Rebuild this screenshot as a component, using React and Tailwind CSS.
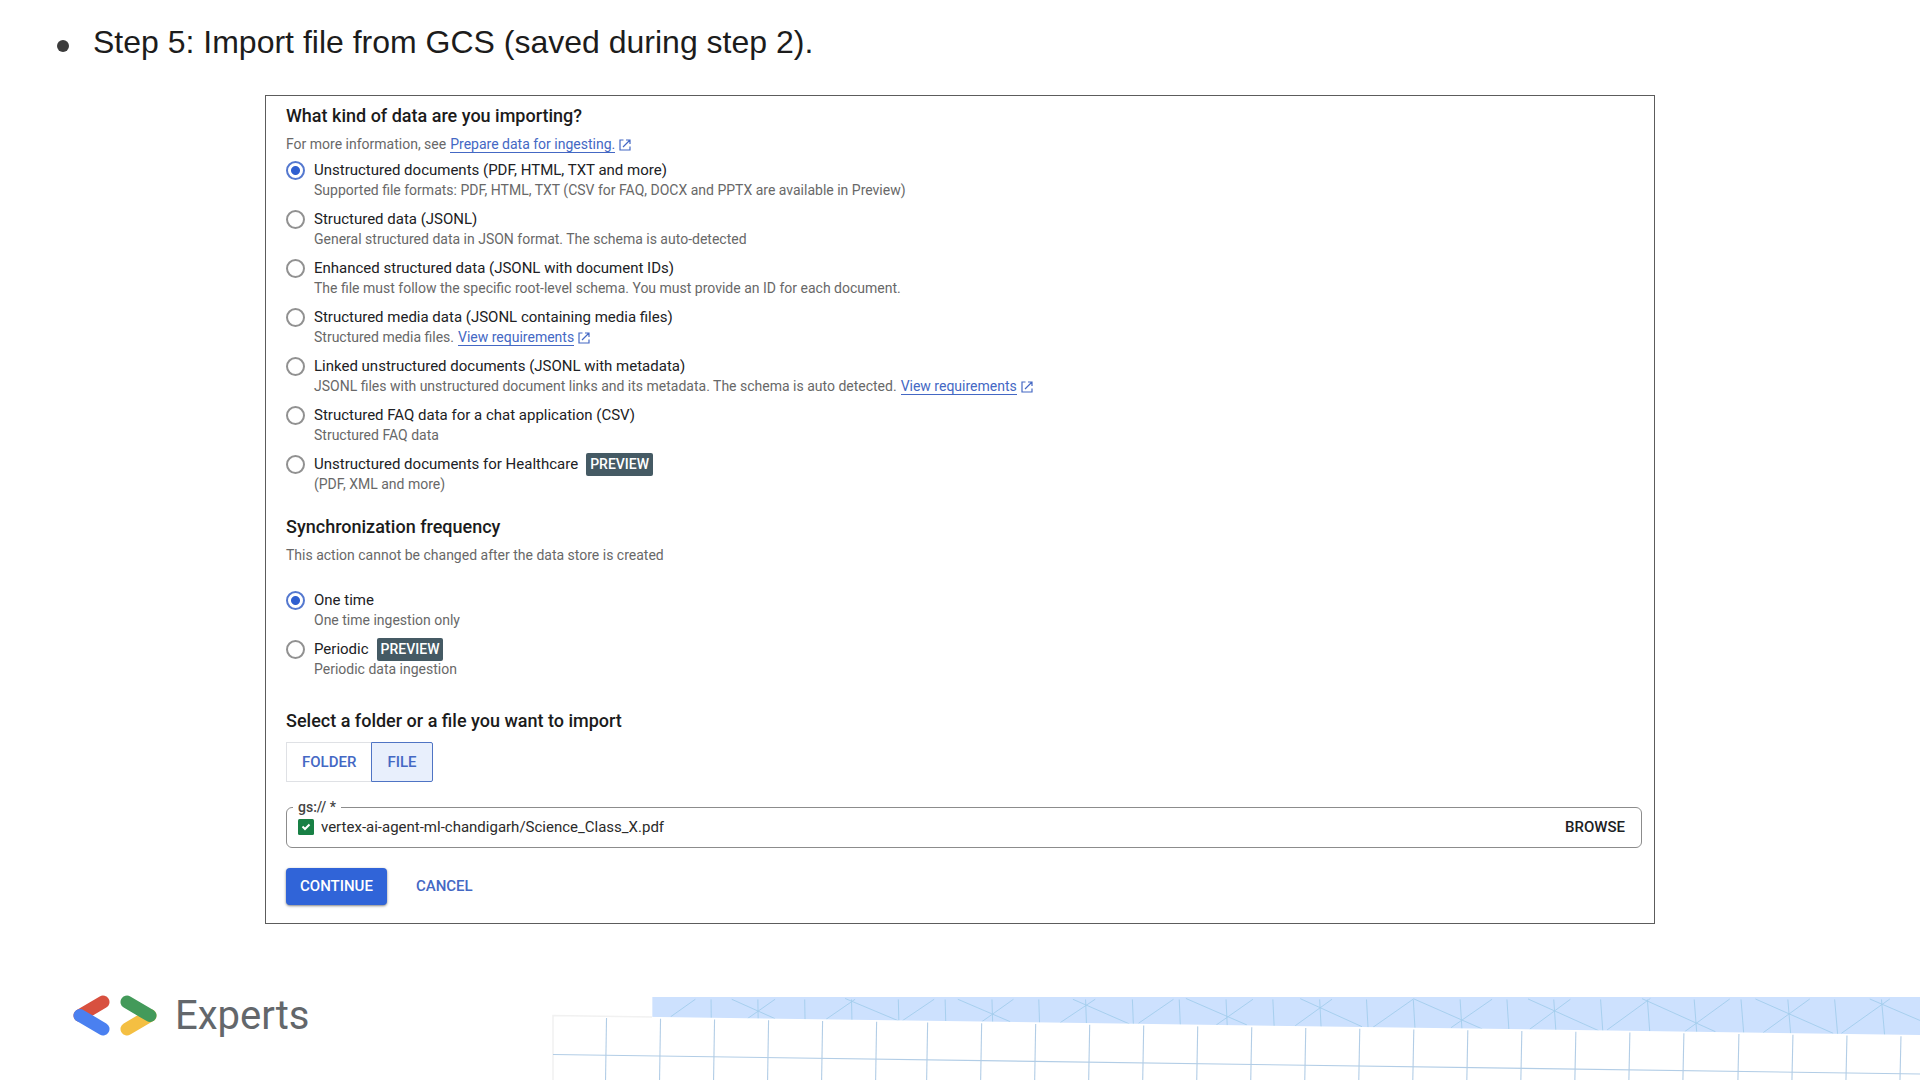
import { useState } from 'react'

const dataKinds = [
  { id: 'unstructured', title: 'Unstructured documents (PDF, HTML, TXT and more)', text: 'Supported file formats: PDF, HTML, TXT (CSV for FAQ, DOCX and PPTX are available in Preview)' },
  { id: 'jsonl', title: 'Structured data (JSONL)', text: 'General structured data in JSON format. The schema is auto-detected' },
  { id: 'jsonl-ids', title: 'Enhanced structured data (JSONL with document IDs)', text: 'The file must follow the specific root-level schema. You must provide an ID for each document.' },
  { id: 'media', title: 'Structured media data (JSONL containing media files)', text: 'Structured media files.', link: 'View requirements' },
  { id: 'linked', title: 'Linked unstructured documents (JSONL with metadata)', text: 'JSONL files with unstructured document links and its metadata. The schema is auto detected.', link: 'View requirements' },
  { id: 'faq', title: 'Structured FAQ data for a chat application (CSV)', text: 'Structured FAQ data' },
  { id: 'healthcare', title: 'Unstructured documents for Healthcare', text: '(PDF, XML and more)', preview: true },
]

const frequencies = [
  { id: 'once', title: 'One time', text: 'One time ingestion only' },
  { id: 'periodic', title: 'Periodic', text: 'Periodic data ingestion', preview: true },
]

function DocLink({ children }) {
  return (
    <a href="#docs" className="inline-flex items-center gap-1 text-[#4468c4]">
      <span className="border-b border-[#4468c4] leading-4">{children}</span>
      <svg viewBox="0 0 12 12" className="size-3" fill="none" stroke="currentColor" strokeWidth="1.2">
        <path d="M4.5 1H1v10h10V7.5M7 1h4v4M11 1 4 8" />
      </svg>
    </a>
  )
}

function RadioRow({ name, item, checked, onChange }) {
  const id = `${name}-${item.id}`
  return (
    <div className="flex gap-[9px]">
      <input
        type="radio"
        id={id}
        name={name}
        checked={checked}
        onChange={onChange}
        className="mt-[2px] size-[19px] shrink-0 appearance-none rounded-full border-2 border-[#919191] checked:border-[#5478cf] checked:bg-[radial-gradient(circle,#2f5fd0_4px,transparent_5px)]"
      />
      <div>
        <div className="flex h-[22px] items-center gap-2">
          <label htmlFor={id} className="text-[15px] leading-[22px] text-[#202124]">{item.title}</label>
          {item.preview && (
            <span className="rounded-[2px] bg-[#455a64] px-1 text-sm font-medium leading-[23px] text-white">PREVIEW</span>
          )}
        </div>
        <p className="flex gap-1 text-sm leading-[19px] text-[#686868]">
          {item.text}
          {item.link && <DocLink>{item.link}</DocLink>}
        </p>
      </div>
    </div>
  )
}

function ImportPanel() {
  const [kind, setKind] = useState('unstructured')
  const [frequency, setFrequency] = useState('once')
  const [path, setPath] = useState('vertex-ai-agent-ml-chandigarh/Science_Class_X.pdf')

  return (
    <section className="mx-auto w-[1390px] max-w-full border border-[#5c5c5c] pt-2 pr-3 pb-[18px] pl-5 font-[Roboto,sans-serif]">
      <h2 className="text-lg font-medium leading-6 text-[#1b1b1b]">What kind of data are you importing?</h2>
      <p className="mt-[7px] flex gap-1 text-sm leading-[19px] text-[#686868]">
        For more information, see <DocLink>Prepare data for ingesting.</DocLink>
      </p>
      <div className="mt-[5px] flex flex-col gap-2">
        {dataKinds.map((item) => (
          <RadioRow key={item.id} name="kind" item={item} checked={kind === item.id} onChange={() => setKind(item.id)} />
        ))}
      </div>

      <h2 className="mt-[21px] text-lg font-medium leading-6 text-[#1b1b1b]">Synchronization frequency</h2>
      <p className="mt-[7px] text-sm leading-[19px] text-[#686868]">This action cannot be changed after the data store is created</p>
      <div className="mt-6 flex flex-col gap-2">
        {frequencies.map((item) => (
          <RadioRow key={item.id} name="frequency" item={item} checked={frequency === item.id} onChange={() => setFrequency(item.id)} />
        ))}
      </div>

      <h2 className="mt-[30px] text-lg font-medium leading-6 text-[#1b1b1b]">Select a folder or a file you want to import</h2>
      <div className="mt-[9px] flex h-10 text-[15px] font-medium text-[#4468c4]">
        <button className="border border-r-0 border-[#dfe1e5] px-[15px]">FOLDER</button>
        <button className="rounded-r-[2px] border border-[#4f74c4] bg-[#e8effc] px-[15px]">FILE</button>
      </div>

      <fieldset className="mt-[17px] rounded-md border border-[#8c8c8c] pr-4 pb-2 pl-[11px]">
        <legend className="-ml-[5px] px-[5px] text-sm font-medium leading-4 text-[#444]">
          <label htmlFor="path">gs:// *</label>
        </legend>
        <div className="flex h-6 items-center gap-[7px]">
          <svg viewBox="0 0 16 16" className="size-4 shrink-0">
            <rect width="16" height="16" rx="1.5" fill="#188045" />
            <path d="m4.5 7.5 2.5 2.5 4.5-4.5" fill="none" stroke="#fff" strokeWidth="2" />
          </svg>
          <input
            id="path"
            value={path}
            onChange={(e) => setPath(e.target.value)}
            className="min-w-0 flex-1 text-[15px] leading-6 text-[#2b2b2b] outline-none"
          />
          <button className="text-[15px] font-medium text-[#202124]">BROWSE</button>
        </div>
      </fieldset>

      <div className="mt-5 flex h-[37px] gap-[15px] text-[15px] font-medium">
        <button className="rounded-[4px] bg-[#3064d8] px-[14px] text-white shadow-sm shadow-black/40">CONTINUE</button>
        <button className="px-[14px] text-[#4468c4]">CANCEL</button>
      </div>
    </section>
  )
}

function ExpertsLogo() {
  return (
    <div className="flex items-center gap-[18px]">
      <svg viewBox="0 0 84 42" className="h-[42px] w-[84px]" fill="none" strokeWidth="13" strokeLinecap="round">
        <path d="M7 20.5 30 7" stroke="#d8503f" />
        <path d="M7 20.5 30 34" stroke="#4a80f0" />
        <path d="M54 34 77 20.5" stroke="#f4bf42" />
        <path d="M54 7 77 20.5" stroke="#439a5a" />
      </svg>
      <span className="font-[Roboto,sans-serif] text-[40px] leading-[44px] text-[#63676b]">Experts</span>
    </div>
  )
}

const sheetLines = [
  606, 660, 714, 768, 822, 876, 927, 981, 1035, 1089, 1143, 1197, 1251,
  1305, 1359, 1413, 1467, 1521, 1575, 1629, 1683, 1738, 1792, 1846, 1900,
]
const bandLines = Array.from({ length: 26 }, (_, i) => 711 + i * 46.8)
const bandDiagonals = [
  'M731.7 999.3 775 1018.7M845 998.5 898 1020.7M957.7 999.3 1010 1021.7M1072.7 999.3 1129.3 1024M1185.7 998.5 1246.7 1025',
  'M1300 998.7 1361.7 1026.7M1413 998.7 1482 1029M1527.7 999 1598.3 1030.7M1641.7 998.7 1715 1031.7M1755 999 1832.7 1033.3M1869.3 999 1920 1020.7',
  'M670.7 1016.7 695.3 999.3M747.3 1018.7 775 999.3M826 1019.3 855 999.3M902.3 1020.7 934 999.3M981.7 1021.7 1013.3 999.3M1060 1022.7 1095 999.3',
  'M1138.3 1023.3 1173.3 999.3M1216 1025 1252.7 999.3M1295 1025.7 1331.7 999.3M1372.7 1027.3 1412.7 999.3M1450.7 1027.7 1491.7 999.3',
  'M1529.3 1029.3 1570 999.3M1606.7 1030 1650 998.5M1684.3 1031.7 1729.3 999M1762.7 1032.7 1809.3 999M1841 1033.3 1889.3 999',
].join('')

// Blue band with a tilted sheet of grid paper in front of it
function PaperStrip() {
  return (
    <svg viewBox="550 994 1370 86" preserveAspectRatio="xMinYMax slice" className="h-[86px] min-w-0 flex-1" fill="none">
      <path d="M652.3 997H1920V1038H652.3Z" fill="#cde1fe" />
      <g stroke="#a3cdec" strokeWidth="0.9">
        {bandLines.map((x, i) => (
          <path key={x} d={`M${x} 999.5 ${x + 0.4 + i * 0.11} 1035`} />
        ))}
        <path d={bandDiagonals} />
      </g>
      <path d="M553 1015.5 1920 1035V1080H553Z" fill="#fff" />
      <path d="M553 1080V1015.5L652 1017" stroke="#f1f1f1" strokeWidth="1.5" />
      <g stroke="#b2cde6" strokeWidth="1.1">
        {sheetLines.map((x) => (
          <path key={x} d={`M${x + 0.5} ${1018 + (x - 606) * 0.0142} ${x - 0.5} 1080`} />
        ))}
        <path d="M553 1054.5 1920 1074" />
      </g>
    </svg>
  )
}

export default function App() {
  return (
    <div className="flex min-h-screen flex-col bg-white">
      <main className="flex-1">
        <ul className="px-[57px] pt-[22px] pb-[33px]">
          <li className="flex items-center gap-6 font-['Liberation_Sans',Arial,sans-serif] text-[32px] leading-10 text-[#1c1c1c]">
            <span className="mt-[7px] size-3 rounded-full bg-[#3c3c3c]" />
            Step 5: Import file from GCS (saved during step 2).
          </li>
        </ul>
        <ImportPanel />
      </main>
      <footer className="flex items-end gap-60 pl-[73px]">
        <div className="pb-[42px]">
          <ExpertsLogo />
        </div>
        <PaperStrip />
      </footer>
    </div>
  )
}
